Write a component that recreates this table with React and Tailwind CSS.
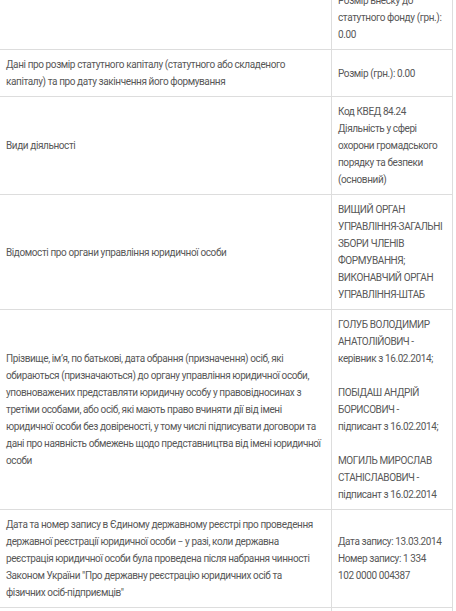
import React from 'react';

// each entry is one visual line; '' gives an empty line
const rows = [
  {
    label: [],
    value: ['Розмір внеску до', 'статутного фонду (грн.):', '0.00'],
  },
  {
    label: [
      'Дані про розмір статутного капіталу (статутного або складеного',
      'капіталу) та про дату закінчення його формування',
    ],
    value: ['Розмір (грн.): 0.00'],
  },
  {
    label: ['Види діяльності'],
    value: ['Код КВЕД 84.24', 'Діяльність у сфері', 'охорони громадського', 'порядку та безпеки', '(основний)'],
  },
  {
    label: ['Відомості про органи управління юридичної особи'],
    value: ['ВИЩИЙ ОРГАН', 'УПРАВЛІННЯ-ЗАГАЛЬНІ', 'ЗБОРИ ЧЛЕНІВ', 'ФОРМУВАННЯ;', 'ВИКОНАВЧИЙ ОРГАН', 'УПРАВЛІННЯ-ШТАБ'],
  },
  {
    label: [
      'Прізвище, ім’я, по батькові, дата обрання (призначення) осіб, які',
      'обираються (призначаються) до органу управління юридичної особи,',
      'уповноважених представляти юридичну особу у правовідносинах з',
      'третіми особами, або осіб, які мають право вчиняти дії від імені',
      'юридичної особи без довіреності, у тому числі підписувати договори та',
      'дані про наявність обмежень щодо представництва від імені юридичної',
      'особи',
    ],
    value: [
      'ГОЛУБ ВОЛОДИМИР',
      'АНАТОЛІЙОВИЧ -',
      'керівник з 16.02.2014;',
      '',
      'ПОБІДАШ АНДРІЙ',
      'БОРИСОВИЧ -',
      'підписант з 16.02.2014;',
      '',
      'МОГИЛЬ МИРОСЛАВ',
      'СТАНІСЛАВОВИЧ -',
      'підписант з 16.02.2014',
    ],
  },
  {
    label: [
      'Дата та номер запису в Єдиному державному реєстрі про проведення',
      'державної реєстрації юридичної особи − у разі, коли державна',
      'реєстрація юридичної особи була проведена після набрання чинності',
      'Законом України "Про державну реєстрацію юридичних осіб та',
      'фізичних осіб-підприємців"',
    ],
    value: ['Дата запису: 13.03.2014', 'Номер запису: 1 334', '102 0000 004387'],
  },
  {
    label: [''],
    value: [''],
  },
];

const Lines = ({ lines }) => (
  <div>
    {lines.map((l, i) => (
      <div key={i} className="whitespace-nowrap h-[17px]">
        {l}
      </div>
    ))}
  </div>
);

const App = () => {
  return (
    <div className="w-[456px] h-[611px] overflow-hidden bg-white">
      <div
        className="-mt-[14px] w-[453px] text-[10px] leading-[17px] tracking-[-0.4px] text-[#585858]"
        style={{ fontFamily: 'Roboto, "Liberation Sans", sans-serif' }}
      >
        {rows.map((row, i) => (
          <div key={i} className="flex border-b border-[#ddd]">
            <div className="w-[332px] shrink-0 border-r border-[#ddd] flex items-center px-[6px] py-[6px]">
              <Lines lines={row.label} />
            </div>
            <div className="w-[121px] shrink-0 border-r border-[#ddd] flex items-center px-[6px] py-[6px]">
              <Lines lines={row.value} />
            </div>
          </div>
        ))}
      </div>
    </div>
  );
};

export default App;
